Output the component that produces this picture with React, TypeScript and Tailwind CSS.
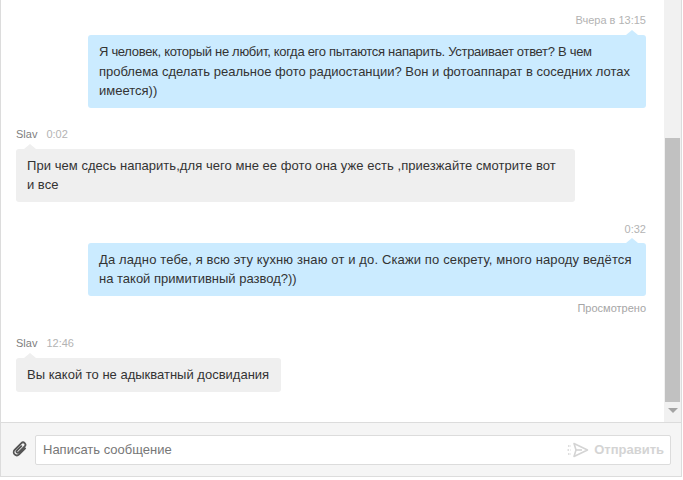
import React from "react";

const Tail = ({ className }: { className: string }) => (
  <span className={`absolute -top-[5px] h-0 w-0 border-x-[6px] border-b-[5px] border-x-transparent ${className}`} />
);

const Outgoing = ({ time, timeClass, children }: { time: string; timeClass: string; children: React.ReactNode }) => (
  <div className="flex flex-col items-end">
    <div className={`text-[11px] leading-[16px] text-[#b3b3b3] ${timeClass}`}>{time}</div>
    <div className="relative w-[558px] rounded-[3px] bg-[#cbebff] px-[11px] py-[7px] text-[13px] leading-[19.5px] text-[#333]">
      <Tail className="right-[8px] border-b-[#cbebff]" />
      {children}
    </div>
  </div>
);

const Incoming = ({ time, width, children }: { time: string; width: string; children: React.ReactNode }) => (
  <div className="flex flex-col items-start">
    <div className="flex h-[23px] items-start gap-[9px] text-[11px] leading-[16px]">
      <span className="text-[#808080]">Slav</span>
      <span className="text-[#b3b3b3]">{time}</span>
    </div>
    <div className={`relative rounded-[3px] bg-[#efefef] px-[11px] py-[7px] text-[13px] leading-[19.5px] text-[#333] ${width}`}>
      <Tail className="left-[8px] border-b-[#efefef]" />
      {children}
    </div>
  </div>
);

export default function App() {
  return (
    <div className="h-[480px] w-[683px] overflow-hidden bg-white font-['Liberation_Sans',Arial,sans-serif]">
      <div className="flex h-[477px] w-[682px] flex-col border-x border-[#dcdcdc]">
        <div className="flex h-[423px] border-b border-[#dcdcdc]">
          <div className="min-w-0 flex-1 pl-[15px] pr-[18px] pt-[12px]">
            <Outgoing time="Вчера в 13:15" timeClass="h-[23px]">
              <span className="block tracking-[-0.3px]">Я человек, который не любит, когда его пытаются напарить. Устраивает ответ? В чем</span>
              <span className="block">проблема сделать реальное фото радиостанции? Вон и фотоаппарат в соседних лотах</span>
              <span className="block">имеется))</span>
            </Outgoing>
            <div className="mt-[18px]">
              <Incoming time="0:02" width="w-[559px]">
                <span className="block tracking-[0.05px]">При чем сдесь напарить,для чего мне ее фото она уже есть ,приезжайте смотрите вот</span>
                <span className="block">и все</span>
              </Incoming>
            </div>
            <div className="mt-[19px]">
              <Outgoing time="0:32" timeClass="h-[22px]">
                <span className="block tracking-[0.13px]">Да ладно тебе, я всю эту кухню знаю от и до. Скажи по секрету, много народу ведётся</span>
                <span className="block">на такой примитивный развод?))</span>
              </Outgoing>
            </div>
            <div className="mt-[4px] text-right text-[11px] leading-[16px] text-[#a6a6a6]">Просмотрено</div>
            <div className="mt-[19px]">
              <Incoming time="12:46" width="h-[34px] w-[265px]">
                Вы какой то не адыкватный досвидания
              </Incoming>
            </div>
          </div>
          <div className="flex w-[17px] shrink-0 flex-col items-center bg-[#f1f1f1]">
            <div className="h-[138px]" />
            <div className="h-[264px] w-[15px] bg-[#c1c1c1]" />
            <div className="mt-[6px] h-0 w-0 border-x-[5px] border-t-[5px] border-x-transparent border-t-[#a3a3a3]" />
          </div>
        </div>
        <div className="flex flex-1 items-center border-b border-[#dcdcdc] bg-[#f5f5f5] px-[10px]">
          <svg viewBox="0 0 16 16" className="h-[17px] w-[17px] shrink-0 text-[#555]" fill="none" stroke="currentColor" strokeWidth="1.7" strokeLinecap="round">
            <path transform="rotate(45 8 8)" d="M11 3.5V11.5a3 3 0 0 1-6 0V2.5a2.2 2.2 0 0 1 4.4 0V10.5a1.2 1.2 0 0 1-2.4 0V4.5" />
          </svg>
          <div className="ml-[7px] flex h-[30px] flex-1 items-center justify-between rounded-[2px] border border-[#dcdcdc] bg-white pl-[7px] pr-[6px]">
            <span className="text-[13px] text-[#777]">Написать сообщение</span>
            <div className="flex items-center gap-[5px]">
              <svg viewBox="0 0 22 18" className="h-[18px] w-[22px] text-[#d4d4d4]" fill="none" stroke="currentColor" strokeWidth="1.6" strokeLinejoin="round">
                <path d="M7 2.5 20.5 9 7 15.5 9 9Z" />
                <path d="M9 9h6" />
                <path d="M1 5h3M0.5 9h3M1 13h3" strokeDasharray="1.5 1" />
              </svg>
              <span className="text-[13px] font-bold text-[#d4d4d4]">Отправить</span>
            </div>
          </div>
        </div>
      </div>
    </div>
  );
}
